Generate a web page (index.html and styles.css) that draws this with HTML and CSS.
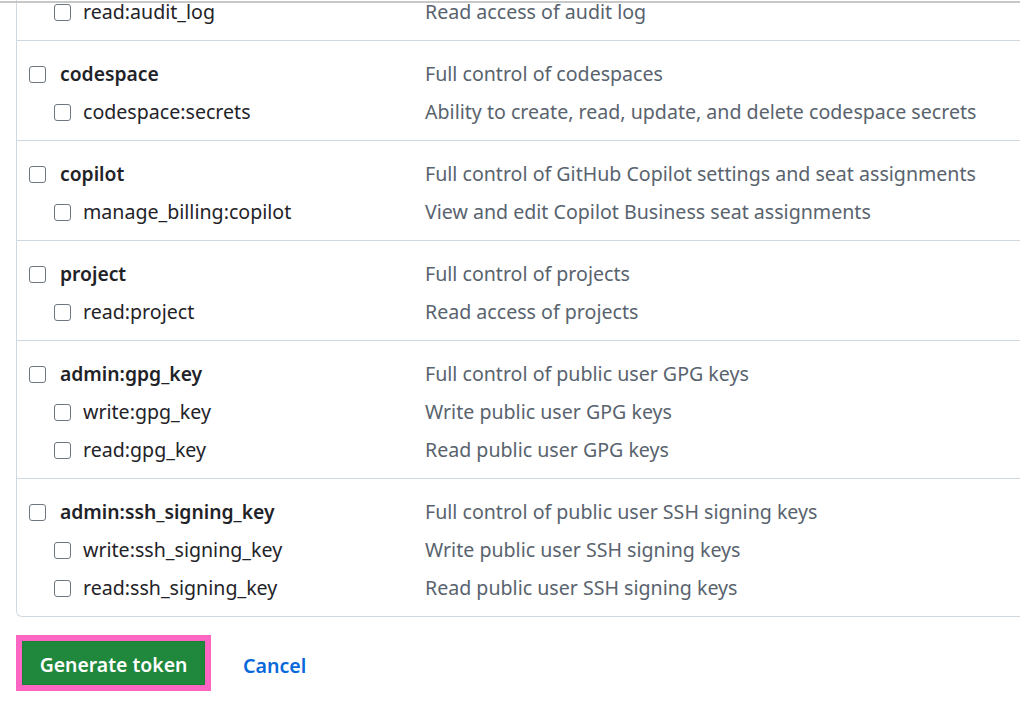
FILE: index.html
```html
<!DOCTYPE html>
<html>
<head>
<meta charset="utf-8">
<link rel="stylesheet" href="styles.css">
</head>
<body>
<div class="topline"></div>
<div class="viewport">
  <div class="box">
    <div class="group first">
      <div class="row sub"><span class="cb"></span><span class="name">read:audit_log</span><span class="desc">Read access of audit log</span></div>
    </div>
    <div class="group">
      <div class="row top"><span class="cb"></span><span class="name">codespace</span><span class="desc">Full control of codespaces</span></div>
      <div class="row sub"><span class="cb"></span><span class="name">codespace:secrets</span><span class="desc">Ability to create, read, update, and delete codespace secrets</span></div>
    </div>
    <div class="group">
      <div class="row top"><span class="cb"></span><span class="name">copilot</span><span class="desc">Full control of GitHub Copilot settings and seat assignments</span></div>
      <div class="row sub"><span class="cb"></span><span class="name">manage_billing:copilot</span><span class="desc">View and edit Copilot Business seat assignments</span></div>
    </div>
    <div class="group">
      <div class="row top"><span class="cb"></span><span class="name">project</span><span class="desc">Full control of projects</span></div>
      <div class="row sub"><span class="cb"></span><span class="name">read:project</span><span class="desc">Read access of projects</span></div>
    </div>
    <div class="group">
      <div class="row top"><span class="cb"></span><span class="name">admin:gpg_key</span><span class="desc">Full control of public user GPG keys</span></div>
      <div class="row sub"><span class="cb"></span><span class="name">write:gpg_key</span><span class="desc">Write public user GPG keys</span></div>
      <div class="row sub"><span class="cb"></span><span class="name">read:gpg_key</span><span class="desc">Read public user GPG keys</span></div>
    </div>
    <div class="group">
      <div class="row top"><span class="cb"></span><span class="name">admin:ssh_signing_key</span><span class="desc">Full control of public user SSH signing keys</span></div>
      <div class="row sub"><span class="cb"></span><span class="name">write:ssh_signing_key</span><span class="desc">Write public user SSH signing keys</span></div>
      <div class="row sub"><span class="cb"></span><span class="name">read:ssh_signing_key</span><span class="desc">Read public user SSH signing keys</span></div>
    </div>
  </div>
  <div class="actions">
    <div class="highlight"><button class="btn-primary">Generate token</button></div>
    <a class="cancel" href="#">Cancel</a>
  </div>
</div>
</body>
</html>
```
FILE: styles.css
```css
html, body {
  margin: 0;
  padding: 0;
  background: #ffffff;
  overflow: hidden;
}
body {
  font-family: "Noto Sans", "Open Sans", sans-serif;
  font-size: 19.6px;
  color: #1f2328;
  width: 1020px;
  height: 712px;
}
.topline {
  position: absolute;
  top: 1px;
  left: 0;
  right: 0;
  height: 2px;
  background: #c8c8c8;
  z-index: 2;
}
.viewport {
  padding-left: 16px;
}
.box {
  width: 1010px;
  border: 1px solid #d1d9e0;
  border-top: none;
  border-radius: 0 0 6px 6px;
}
.group {
  padding: 14px 0 9px;
  border-top: 1px solid #d1d9e0;
}
.group.first {
  padding: 0 0 16px;
  border-top: none;
}
.row {
  display: flex;
  align-items: center;
  height: 38px;
}
.group.first .row {
  height: 24px;
  line-height: 1.2;
}
.group.first .row .name,
.group.first .row .desc {
  margin-bottom: 0;
}
.row.top {
  padding-left: 12px;
}
.row.sub {
  padding-left: 37px;
}
.cb {
  flex: none;
  box-sizing: border-box;
  width: 17px;
  height: 17px;
  border: 1.5px solid #6e7781;
  border-radius: 3px;
  background: #fff;
}
.row.top .cb { margin-right: 14px; }
.row.sub .cb { margin-right: 12px; }
.name {
  flex: none;
  margin-bottom: 2px;
}
.row.top .name {
  width: 365px;
  font-weight: 600;
  font-size: 19.3px;
}
.row.sub .name {
  width: 342px;
}
.desc {
  color: #59636e;
  white-space: nowrap;
  margin-bottom: 2px;
}
.actions {
  display: flex;
  align-items: center;
  margin-top: 18px;
}
.highlight {
  border: 6px solid #ff66c4;
  display: flex;
}
.btn-primary {
  width: 183px;
  height: 44px;
  border: 1px solid #1a7f37;
  background: #1f883d;
  color: #ffffff;
  font-family: inherit;
  font-size: 19.4px;
  font-weight: 600;
  padding: 3px 0 0;
  border-radius: 0;
}
.cancel {
  margin-left: 32px;
  padding-top: 4px;
  color: #0969da;
  font-weight: 600;
  text-decoration: none;
}
```
